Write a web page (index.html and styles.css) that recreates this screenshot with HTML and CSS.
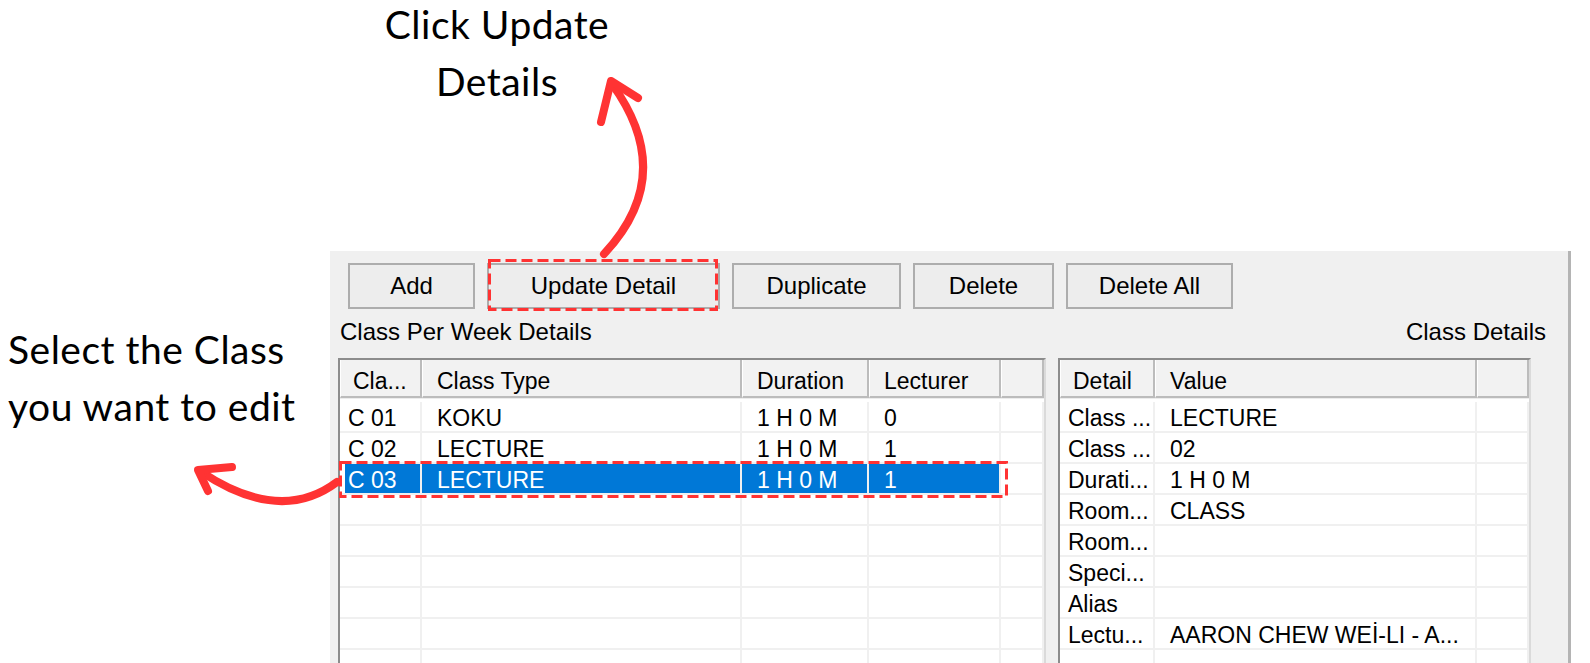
FILE: index.html
```html
<!DOCTYPE html>
<html lang="en">
<head>
  <meta charset="UTF-8">
  <title>Update Class Detail</title>
  <link rel="stylesheet" href="styles.css">
</head>
<body>
  <div class="stage">
    <p class="note note-top">Click Update<br>Details</p>
    <p class="note note-left">Select the Class<br>you want to edit</p>

    <!-- Class form -->
    <div class="window">
      <div class="toolbar">
        <button class="btn btn-add">Add</button>
        <button class="btn btn-update">Update Detail</button>
        <button class="btn btn-duplicate">Duplicate</button>
        <button class="btn btn-delete">Delete</button>
        <button class="btn btn-delete-all">Delete All</button>
      </div>
      <div class="captions">
        <span>Class Per Week Details</span>
        <span>Class Details</span>
      </div>
      <div class="lists">
        <div class="listview classes">
          <div class="lv-head"><span>Cla...</span><span>Class Type</span><span>Duration</span><span>Lecturer</span><span></span></div>
          <div class="lv-body">
            <div class="lv-row"><span>C 01</span><span>KOKU</span><span>1 H 0 M</span><span>0</span><span></span></div>
            <div class="lv-row"><span>C 02</span><span>LECTURE</span><span>1 H 0 M</span><span>1</span><span></span></div>
            <div class="lv-row selected"><span>C 03</span><span>LECTURE</span><span>1 H 0 M</span><span>1</span><span></span></div>
            <div class="lv-row"><span></span><span></span><span></span><span></span><span></span></div>
            <div class="lv-row"><span></span><span></span><span></span><span></span><span></span></div>
            <div class="lv-row"><span></span><span></span><span></span><span></span><span></span></div>
            <div class="lv-row"><span></span><span></span><span></span><span></span><span></span></div>
            <div class="lv-row"><span></span><span></span><span></span><span></span><span></span></div>
            <div class="lv-row"><span></span><span></span><span></span><span></span><span></span></div>
          </div>
        </div>
        <div class="listview details">
          <div class="lv-head"><span>Detail</span><span>Value</span><span></span></div>
          <div class="lv-body">
            <div class="lv-row"><span>Class ...</span><span>LECTURE</span><span></span></div>
            <div class="lv-row"><span>Class ...</span><span>02</span><span></span></div>
            <div class="lv-row"><span>Durati...</span><span>1 H 0 M</span><span></span></div>
            <div class="lv-row"><span>Room...</span><span>CLASS</span><span></span></div>
            <div class="lv-row"><span>Room...</span><span></span><span></span></div>
            <div class="lv-row"><span>Speci...</span><span></span><span></span></div>
            <div class="lv-row"><span>Alias</span><span></span><span></span></div>
            <div class="lv-row"><span>Lectu...</span><span>AARON CHEW WEİ-LI - A...</span><span></span></div>
            <div class="lv-row"><span></span><span></span><span></span></div>
          </div>
        </div>
      </div>
    </div>

    <!-- Annotation marks -->
    <svg class="marks" viewBox="0 0 1590 663">
      <g fill="none" stroke="#ff3333" stroke-width="8" stroke-linecap="round" stroke-linejoin="round">
        <path d="M604 254 Q678 175 612 84"/>
        <path d="M601 122 L611 81 L638 98"/>
        <path d="M337 482 Q280 525 200 471"/>
        <path d="M232 467 L198 470 L208 491"/>
      </g>
      <g fill="none" stroke="#ff3333" stroke-width="3" stroke-dasharray="11 5">
        <rect x="489.5" y="260.5" width="227" height="49"/>
        <rect x="340.5" y="462.5" width="666" height="34"/>
      </g>
    </svg>
  </div>
</body>
</html>
```

FILE: styles.css
```css
/* Base */
body {
  margin: 0;
  background: #fff;
  font-family: "Liberation Sans", Arial, sans-serif;
  color: #000;
}
.stage {
  position: relative;
  width: 1590px;
  height: 663px;
  overflow: hidden;
}
/* Notes */
.note {
  position: absolute;
  margin: 0;
  font-family: Lato, "Open Sans", sans-serif;
  font-size: 39px;
  line-height: 57px;
  letter-spacing: 0.5px;
  color: #000;
}
.note-top {
  left: 347px;
  top: -4px;
  width: 300px;
  text-align: center;
}
.note-left {
  left: 8px;
  top: 321px;
}
.marks {
  position: absolute;
  left: 0;
  top: 0;
  width: 1590px;
  height: 663px;
  pointer-events: none;
}
/* Window */
.window {
  margin: 251px 0 0 330px;
  width: 1238px;
  height: 412px;
  background: #f0f0f0;
  border-right: 3px solid #b4b4b4;
}
.toolbar {
  display: flex;
  gap: 12px;
  padding: 12px 0 0 18px;
}
.btn {
  height: 46px;
  padding: 0;
  background: #ededed;
  border: 2px solid #adadad;
  font: 24px "Liberation Sans", Arial, sans-serif;
  color: #000;
}
.btn-add { width: 127px; }
.btn-update { width: 233px; }
.btn-duplicate { width: 169px; }
.btn-delete { width: 141px; }
.btn-delete-all { width: 167px; }
.captions {
  display: flex;
  justify-content: space-between;
  margin-top: 9px;
  padding: 0 22px 0 10px;
  font-size: 24px;
  line-height: 28px;
}
/* List views */
.lists {
  display: flex;
  gap: 12px;
  margin-top: 12px;
  padding-left: 8px;
}
.listview {
  height: 400px;
  overflow: hidden;
  background: #fff;
  border: 2px solid;
  border-color: #8c8c8c #dadada #dadada #8c8c8c;
  font-size: 23px;
}
.classes {
  width: 704px;
  --cols: 82px 320px 127px 132px 1fr;
}
.details {
  width: 469px;
  --cols: 95px 322px 1fr;
}
.lv-head,
.lv-row {
  display: grid;
  grid-template-columns: var(--cols);
}
.lv-head {
  height: 38px;
  background: #f2f2f2;
}
.lv-head span {
  border-left: 1px solid #fff;
  border-right: 2px solid #bcbcbc;
  border-bottom: 2px solid #bcbcbc;
  padding: 7px 0 0 14px;
  line-height: 28px;
  white-space: nowrap;
}
.lv-head span:first-child { padding-left: 12px; }
.lv-body {
  padding-top: 3px;
  border-top: 1px solid #ececec;
}
.lv-row { height: 31px; }
.lv-row span {
  border-right: 2px solid #f0f0f0;
  border-bottom: 2px solid #f0f0f0;
  padding: 4px 0 0 15px;
  line-height: 25px;
  white-space: nowrap;
  overflow: hidden;
}
.lv-row span:first-child { padding-left: 8px; }
.lv-row.selected span:not(:last-child) {
  background: #0078d7;
  color: #fff;
}
.lv-row.selected span:first-child { box-shadow: inset 5px 0 #fff; }
```
